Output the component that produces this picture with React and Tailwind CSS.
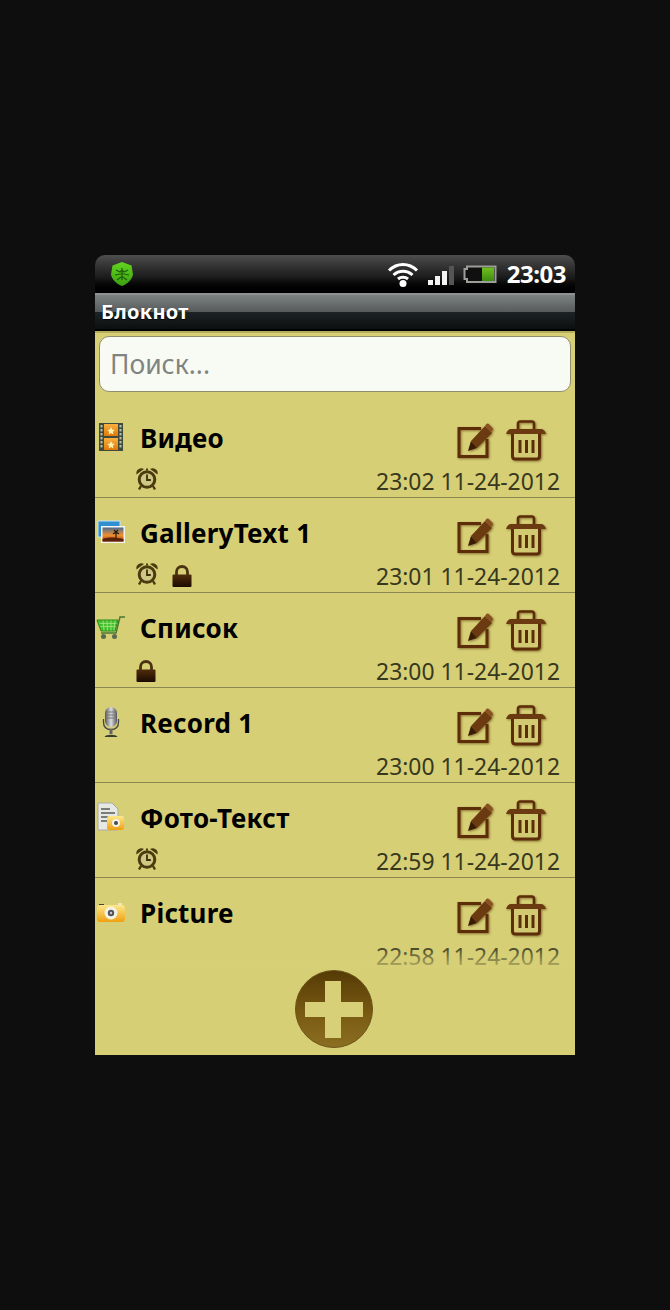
import React from "react";

const Defs = () => (
  <svg width="0" height="0" className="absolute">
    <defs>
      <linearGradient id="lockG" x1="0" y1="0" x2="0" y2="1">
        <stop offset="0" stopColor="#4f2c0a" />
        <stop offset="1" stopColor="#1c0a02" />
      </linearGradient>
      <linearGradient id="plusG" x1="0" y1="0" x2="0" y2="1">
        <stop offset="0" stopColor="#553a06" />
        <stop offset="0.55" stopColor="#785a12" />
        <stop offset="1" stopColor="#8c6e22" />
      </linearGradient>
      <linearGradient id="orangeG" x1="0" y1="0" x2="0" y2="1">
        <stop offset="0" stopColor="#f8b040" />
        <stop offset="1" stopColor="#e07808" />
      </linearGradient>
      <linearGradient id="camG" x1="0" y1="0" x2="0" y2="1">
        <stop offset="0" stopColor="#fde88a" />
        <stop offset="1" stopColor="#f0a010" />
      </linearGradient>
      <linearGradient id="sunsetG" x1="0" y1="0" x2="0" y2="1">
        <stop offset="0" stopColor="#4a6a90" />
        <stop offset="0.55" stopColor="#f09030" />
        <stop offset="1" stopColor="#a04010" />
      </linearGradient>
      <linearGradient id="micG" x1="0" y1="0" x2="1" y2="0">
        <stop offset="0" stopColor="#54565a" />
        <stop offset="0.5" stopColor="#dcdcdc" />
        <stop offset="1" stopColor="#55575a" />
      </linearGradient>
      <linearGradient id="shieldG" x1="0" y1="0" x2="0" y2="1">
        <stop offset="0" stopColor="#62d41e" />
        <stop offset="1" stopColor="#3ca010" />
      </linearGradient>
      <linearGradient id="battG" x1="0" y1="0" x2="0" y2="1">
        <stop offset="0" stopColor="#70c020" />
        <stop offset="1" stopColor="#3f8c10" />
      </linearGradient>
    </defs>
  </svg>
);

const Film = () => (
  <svg width="26" height="30" viewBox="0 0 26 30" className="-ml-px">
    <rect x="1" y="1" width="24" height="28" fill="#3f4a3c" />
    <rect x="6" y="2" width="14" height="12" fill="url(#orangeG)" />
    <rect x="6" y="16" width="14" height="12" fill="url(#orangeG)" />
    <path d="M13 5l1.2 2.6 2.6.3-2 1.8.6 2.7-2.4-1.4-2.4 1.4.6-2.7-2-1.8 2.6-.3zM13 19l1.2 2.6 2.6.3-2 1.8.6 2.7-2.4-1.4-2.4 1.4.6-2.7-2-1.8 2.6-.3z" fill="#fff2b0" />
    {[3, 7, 11, 15, 19, 23].map((y) => (
      <g key={y}>
        <rect x="2.5" y={y} width="2" height="2.4" fill="#b8c4a8" />
        <rect x="21.5" y={y} width="2" height="2.4" fill="#b8c4a8" />
      </g>
    ))}
  </svg>
);

const Gallery = () => (
  <svg width="28" height="24" viewBox="0 0 28 24">
    <rect x="1" y="1" width="22" height="16" fill="#2f8fd0" stroke="#bfe4f8" />
    <rect x="4" y="6" width="24" height="17" fill="#f4f4f0" />
    <rect x="5.5" y="7.5" width="21" height="14" fill="url(#sunsetG)" />
    <path d="M19 20v-8M19 12l-3 2M19 12l3 2M19 12l-2-2M19 12l2-2" stroke="#2a1808" strokeWidth="1.2" fill="none" />
    <path d="M5.5 19c5-2 12-2 21 0v2.500h-21z" fill="#5a2008" />
  </svg>
);

const Cart = () => (
  <svg width="30" height="26" viewBox="0 0 30 26">
    <path d="M1 6h21l-3 11H5z" fill="#46c030" stroke="#2c8a20" strokeWidth="1" />
    <path d="M3.500 9.500h17M4.500 12.500h15M7 6.500l1 10M11 6.500l.5 10M15 6.500v10M19 6.500l-1 10" stroke="#a4e880" strokeWidth=".8" fill="none" />
    <path d="M5 19h15l4-16h5" stroke="#4a7a30" strokeWidth="1.500" fill="none" />
    <circle cx="7.500" cy="22.500" r="2.500" fill="#5a6a50" />
    <circle cx="18.500" cy="22.500" r="2.500" fill="#5a6a50" />
  </svg>
);

const Mic = () => (
  <svg width="18" height="32" viewBox="0 0 18 32" className="-ml-px">
    <rect x="3" y="1" width="12" height="20" rx="6" fill="url(#micG)" />
    <path d="M4 6h10M4 9h10M4 12h10" stroke="#777" strokeWidth="1" />
    <path d="M1.500 13v3c0 5 3 7.500 7.500 7.500s7.500-2.500 7.500-7.500v-3" stroke="#444" strokeWidth="1.300" fill="none" />
    <rect x="7.500" y="23" width="3" height="5" fill="#666" />
    <path d="M2.500 31c1-3 12-3 13 0z" fill="#3a3a34" />
  </svg>
);

const NotePhoto = () => (
  <svg width="28" height="30" viewBox="0 0 28 30">
    <path d="M1 1h14l6 6v21H1z" fill="#e6e8e4" stroke="#a8aca4" />
    <path d="M4 6h9v2H4zM4 10h14v2H4zM4 14h14v2H4zM4 18h8v2H4z" fill="#7a7e78" />
    <rect x="10" y="14" width="17" height="14" rx="2" fill="url(#camG)" />
    <circle cx="19" cy="21" r="4" fill="#f2f2ea" />
    <circle cx="19" cy="21" r="2" fill="#4a4a50" />
  </svg>
);

const Camera = () => (
  <svg width="30" height="22" viewBox="0 0 30 22">
    <path d="M3 3h5v2H3z" fill="#4a4030" />
    <rect x="1" y="4" width="28" height="17" rx="3" fill="url(#camG)" />
    <rect x="22" y="2" width="4" height="3" fill="#f4e6b0" />
    <circle cx="15" cy="12" r="6.500" fill="#f4f2e4" />
    <circle cx="15" cy="12" r="3.200" fill="#54545c" />
    <circle cx="15" cy="12" r="1.200" fill="#c8c8d0" />
  </svg>
);

const Alarm = () => (
  <svg width="24" height="25" viewBox="0 0 24 25">
    <path d="M1.500 8.500a5 5 0 0 1 7.500-5.500zM22.500 8.500a5 5 0 0 0-7.500-5.500z" fill="#4d3a10" />
    <circle cx="12" cy="13.500" r="7.800" fill="#cfc784" stroke="#4d3b10" strokeWidth="3" />
    <path d="M12 8.500v5.500h3.800" stroke="#3d2e0a" strokeWidth="1.800" fill="none" />
    <path d="M6 20l-2 3.500M18 20l2 3.500" stroke="#4d3b10" strokeWidth="2.400" />
    <path d="M12 2.500v2" stroke="#4d3b10" strokeWidth="2" />
  </svg>
);

const Lock = () => (
  <svg width="22" height="24" viewBox="0 0 22 24" className="mt-[3px]">
    <path d="M5.500 11V8a5.500 5.500 0 0 1 11 0v3" stroke="#4a3212" strokeWidth="2.800" fill="none" />
    <rect x="1.500" y="10.500" width="19" height="12.500" rx="1" fill="url(#lockG)" />
  </svg>
);

const Edit = () => (
  <svg width="40" height="40" viewBox="0 0 40 40" className="[filter:drop-shadow(1px_1px_1px_rgba(90,60,10,0.6))]">
    <path d="M27 7.500H5v28h28V18" stroke="#5c2d08" strokeWidth="3" fill="none" />
    <path d="M17 20L31 5l7 7-15 15z" fill="#6b3a10" />
    <path d="M14 30l3-10 6 7z" fill="#3a1c04" />
    <path d="M32 3.500c1-1.200 2.200-1.200 3.200 0l3 3c1 1 1 2.200 0 3.200L37 11l-6-6z" fill="#8a5020" />
  </svg>
);

const Trash = () => (
  <svg width="40" height="41" viewBox="0 0 40 41" className="[filter:drop-shadow(1px_1px_1px_rgba(90,60,10,0.6))]">
    <path d="M12 9V3.500c0-1 1-2 2-2h12c1 0 2 1 2 2V9" stroke="#5c2d08" strokeWidth="2.600" fill="none" />
    <path d="M0 14c1-3.500 3-5 5-5h30c2 0 4 1.500 5 5z" fill="#6b3a10" />
    <path d="M6.500 14v22c0 2 1 3 3 3h21c2 0 3-1 3-3V14" stroke="#5c2d08" strokeWidth="3" fill="#d2ca72" />
    <path d="M14 20v13M20.500 20v13M27 20v13" stroke="#5c2d08" strokeWidth="3" />
  </svg>
);

const Shield = () => (
  <svg width="24" height="26" viewBox="0 0 24 26">
    <path d="M12 1l9.500 3.500 1.500 9c-1 5.500-6 9.500-11 11.500C7 23 2 19 1 13.500l1.500-9z" fill="url(#shieldG)" />
    <path d="M6 9l4 2 2-2 2 2 4-2M5 14l5-1h4l5 1M7 19l4-3h2l4 3M12 7v12" stroke="#1c600c" strokeWidth="1.200" fill="none" />
  </svg>
);

const Wifi = () => (
  <svg width="32" height="26" viewBox="0 0 32 26">
    <path d="M2 9.500c8-8 20-8 28 0M6.500 14c5.500-5 13.500-5 19 0M11 18c2.800-2.400 7.200-2.400 10 0" stroke="#fff" strokeWidth="3" fill="none" />
    <circle cx="16" cy="22.500" r="3.500" fill="#fff" />
  </svg>
);

const Signal = () => (
  <svg width="27" height="20" viewBox="0 0 27 20">
    <rect x="0" y="14" width="5" height="5" fill="#f4f4f4" />
    <rect x="7" y="10" width="5" height="9" fill="#f4f4f4" />
    <rect x="14" y="5" width="5" height="14" fill="#f4f4f4" />
    <rect x="21" y="0" width="5" height="19" fill="#555" />
  </svg>
);

const Battery = () => (
  <svg width="34" height="20" viewBox="0 0 34 20">
    <path d="M4 5V2.500h28.500v15.500H4V15H1.500V5z" fill="#101010" stroke="#9c9e9a" strokeWidth="2" />
    <rect x="19" y="3.500" width="12" height="13.500" fill="url(#battG)" />
  </svg>
);

const Plus = () => (
  <svg width="80" height="80" viewBox="0 0 80 80">
    <circle cx="40" cy="40" r="38.500" fill="url(#plusG)" stroke="#6b5418" strokeWidth="1" />
    <path d="M31 12h16v21h22v15H47v21H31V48H11V33h20z" fill="#d8d078" />
  </svg>
);

const notes = [
  { icon: <Film />, title: "Видео", date: "23:02 11-24-2012", alarm: true },
  { icon: <Gallery />, title: "GalleryText 1", date: "23:01 11-24-2012", alarm: true, lock: true },
  { icon: <Cart />, title: "Список", date: "23:00 11-24-2012", lock: true },
  { icon: <Mic />, title: "Record 1", date: "23:00 11-24-2012" },
  { icon: <NotePhoto />, title: "Фото-Текст", date: "22:59 11-24-2012", alarm: true },
  { icon: <Camera />, title: "Picture", date: "22:58 11-24-2012" },
];

const Row = ({ n }) => (
  <div className="h-[95px] shrink-0 flex flex-col border-b border-[#8c8750] last:border-b-0">
    <div className="h-[62px] shrink-0 pt-[17px] flex items-center">
      <div className="w-[30px] ml-px flex justify-center shrink-0 -mt-[12px]">{n.icon}</div>
      <div className="ml-[14px] flex-1 text-[26px] font-bold text-black leading-none tracking-[0.25px] -mt-[9px]">{n.title}</div>
      <div className="flex items-center gap-[12px] mr-[29px] -mt-[4px]">
        <Edit />
        <Trash />
      </div>
    </div>
    <div className="flex-1 flex items-start">
      <div className="flex items-start gap-[12px] ml-[40px] mt-[1px] w-[100px]">
        {n.alarm && <Alarm />}
        {n.lock && <Lock />}
      </div>
      <div className="ml-auto mr-[15px] mt-[5px] text-[22.9px] leading-[24px] text-[#38381e]">{n.date}</div>
    </div>
  </div>
);

export default function App() {
  return (
    <div className="w-full h-[1310px] bg-[#0e0e0e] flex items-center justify-center font-['Noto_Sans','Open_Sans',sans-serif]">
      <Defs />
      <div className="w-[480px] h-[800px] flex flex-col overflow-hidden">
        <div className="h-[38px] shrink-0 rounded-t-[10px] bg-gradient-to-b from-[#4e4e4e] via-[#1a1a1a] via-60% to-black flex items-center pl-[15px] pr-[9px]">
          <Shield />
          <div className="ml-auto flex items-center">
            <Wifi />
            <div className="ml-[9px] mt-[4px] flex"><Signal /></div>
            <div className="ml-[8px] flex"><Battery /></div>
            <div className="ml-[10px] text-[24px] font-bold text-white leading-none tracking-[-0.5px]">23:03</div>
          </div>
        </div>
        <div className="h-[38px] shrink-0 flex flex-col border-t-2 border-[#8e9292] border-b-2 border-b-black">
          <div className="flex-1 bg-[linear-gradient(to_bottom,#7c8282_0%,#565a5a_50%,#1d2324_50%,#0c0f10_100%)] flex items-center pl-[6px]">
            <span className="text-[20px] font-bold text-white leading-none tracking-[0.3px] [text-shadow:0_1px_1px_#000]">Блокнот</span>
          </div>
        </div>
        <div className="flex-1 flex flex-col min-h-0 border-t-2 border-[#b5ae5e] bg-[#d6cf76]">
          <div className="px-[4px] pt-[3px] pb-[11px] shrink-0">
            <div className="h-[56px] rounded-[10px] bg-[#f8fbf4] border border-[#8f8f70] flex items-center pl-[10px] text-[26.5px] text-[#808480] leading-none">
              Поиск...
            </div>
          </div>
          <div className="relative flex-1 min-h-0">
            <div className="flex flex-col">
              {notes.map((n) => (
                <Row key={n.title} n={n} />
              ))}
            </div>
            <div className="absolute left-0 right-0 bottom-0 h-[25px] bg-gradient-to-b from-[#d6cf7600] to-[#d7d076e0]" />
          </div>
          <div className="h-[85px] shrink-0 flex justify-center">
            <div className="mr-[2px] -mt-px flex h-[80px] relative"><Plus /></div>
          </div>
        </div>
      </div>
    </div>
  );
}
